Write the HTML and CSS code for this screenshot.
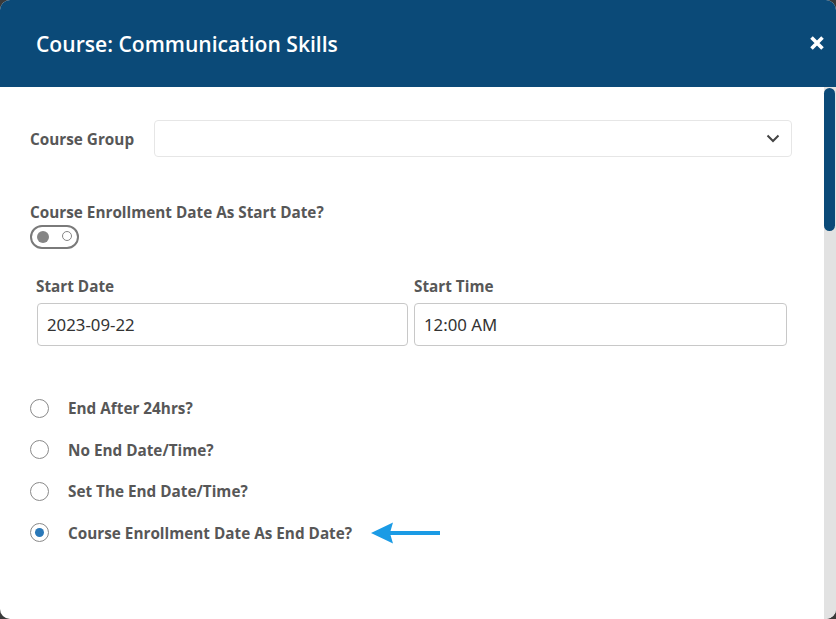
FILE: index.html
```html
<!DOCTYPE html>
<html>
<head>
<meta charset="utf-8">
<link rel="stylesheet" href="styles.css">
</head>
<body>
<div class="modal">
  <header class="modal-header">
    <h1 class="title">Course: Communication Skills</h1>
    <svg class="close" width="14" height="14" viewBox="0 0 14 14"><path d="M1.5 1.5 L12.5 12.5 M12.5 1.5 L1.5 12.5" stroke="#fff" stroke-width="3.6"/></svg>
  </header>
  <div class="modal-body">
    <div class="content">
      <div class="row-group">
        <label class="label">Course Group</label>
        <div class="select">
          <svg class="chevron" width="14" height="9" viewBox="0 0 14 9"><path d="M1.5 1.5 L7 7 L12.5 1.5" fill="none" stroke="#444" stroke-width="2"/></svg>
        </div>
      </div>
      <div class="toggle-block">
        <div class="label">Course Enrollment Date As Start Date?</div>
        <div class="toggle"><span class="knob"></span><span class="ring"></span></div>
      </div>
      <div class="date-grid">
        <div class="field">
          <div class="label">Start Date</div>
          <div class="input">2023-09-22</div>
        </div>
        <div class="field">
          <div class="label">Start Time</div>
          <div class="input">12:00 AM</div>
        </div>
      </div>
      <ul class="radios">
        <li class="radio-row"><span class="radio"></span><span class="label">End After 24hrs?</span></li>
        <li class="radio-row"><span class="radio"></span><span class="label">No End Date/Time?</span></li>
        <li class="radio-row"><span class="radio"></span><span class="label">Set The End Date/Time?</span></li>
        <li class="radio-row"><span class="radio checked"></span><span class="label">Course Enrollment Date As End Date?</span>
          <svg class="arrow" width="70" height="22" viewBox="0 0 70 22"><path d="M0 11 L22 0.5 L19.5 9 L69 9 L69 13 L19.5 13 L22 21.5 Z" fill="#1b9be5"/></svg>
        </li>
      </ul>
    </div>
    <div class="scrollbar"><div class="thumb"></div></div>
  </div>
</div>
</body>
</html>
```
FILE: styles.css
```css
* { box-sizing: border-box; }
html, body { margin: 0; padding: 0; }
body {
  width: 836px;
  height: 619px;
  background: #3a3a3a;
  font-family: "Open Sans", "Noto Sans", sans-serif;
  overflow: hidden;
}
.modal {
  width: 836px;
  height: 619px;
  border-radius: 10px;
  overflow: hidden;
  background: #fff;
  display: flex;
  flex-direction: column;
}
.modal-header {
  height: 87px;
  flex: none;
  background: #0b4a78;
  display: flex;
  align-items: center;
  justify-content: space-between;
  padding: 0 12px 0 36px;
}
.title {
  margin: 0;
  color: #fff;
  font-size: 21.1px;
  font-weight: 600;
  line-height: 28px;
}
.close {
  display: block;
  margin-top: -2px;
}
.modal-body {
  flex: 1;
  display: flex;
}
.content {
  flex: 1;
  padding: 33px 32px 0 30px;
}
.scrollbar {
  width: 12px;
  flex: none;
  background: #e2e2e2;
}
.thumb {
  height: 143px;
  margin-top: 1px;
  width: 11px;
  background: #0b4a78;
  border-radius: 6px;
}
.label {
  color: #575757;
  font-weight: 700;
  font-size: 15.3px;
  line-height: 20px;
}
.row-group {
  display: flex;
  align-items: center;
}
.row-group .label { width: 124px; }
.select {
  flex: 1;
  height: 37px;
  border: 1px solid #e6e6e6;
  border-radius: 4px;
  display: flex;
  align-items: center;
  justify-content: flex-end;
  padding-right: 11px;
}
.toggle-block {
  margin-top: 45px;
}
.toggle {
  margin-top: 3px;
  width: 49px;
  height: 24px;
  border: 2px solid #7a7a7a;
  border-radius: 12px;
  display: flex;
  align-items: center;
  justify-content: space-between;
  padding: 0 5px 0 5px;
}
.knob {
  width: 12px;
  height: 12px;
  border-radius: 50%;
  background: #858585;
}
.ring {
  width: 10px;
  height: 10px;
  border-radius: 50%;
  border: 1.5px solid #858585;
  margin-top: -3px;
}
.date-grid {
  display: grid;
  grid-template-columns: 372px 373px;
  column-gap: 6px;
  margin-top: 27px;
  padding-left: 6px;
}
.field .label { margin-bottom: 7px; }
.input {
  height: 43px;
  border: 1px solid #c8c8c8;
  border-radius: 4px;
  display: flex;
  align-items: center;
  padding-left: 9px;
  color: #333;
  font-size: 16.8px;
  font-family: "Noto Sans", "Open Sans", sans-serif;
}
.date-grid .field:first-child .input { margin-left: 1px; }
.radios {
  list-style: none;
  margin: 52px 0 0 0;
  padding: 0;
  display: flex;
  flex-direction: column;
  gap: 21.6px;
}
.radio-row {
  display: flex;
  align-items: center;
  height: 20px;
}
.radio {
  width: 19px;
  height: 19px;
  border-radius: 50%;
  border: 1px solid #8a8a8a;
  margin-right: 19px;
  display: flex;
  align-items: center;
  justify-content: center;
}
.radio.checked::after {
  content: "";
  width: 9px;
  height: 9px;
  border-radius: 50%;
  background: #2a78b8;
}
.arrow { margin-left: 19px; flex: none; }
```
